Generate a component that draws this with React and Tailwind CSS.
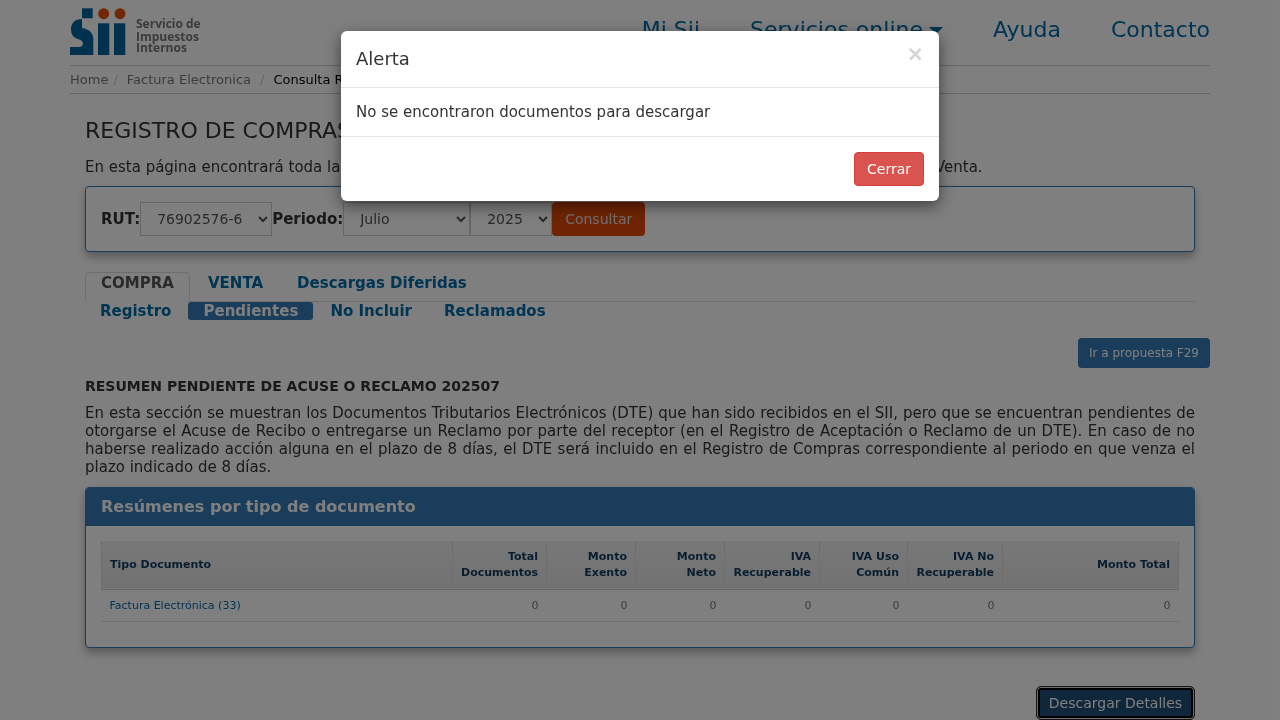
import React from "react";

function Logo() {
  return (
    <svg width="131" height="48" viewBox="0 0 131 48" className="block">
      <rect x="12" y="0.3" width="10.7" height="10" fill="#00649e" />
      <path d="M12 11 V20 C18 21 23.3 24 23.3 31 V47 H0 V39 H9 C12 39 13 37 13 35.5 C13 33 11 32 8 31 C4 30 1 27 1 21 C1 15 5 11 12 11 Z" fill="#00649e" />
      <circle cx="33.7" cy="5.7" r="5.5" fill="#e0500f" />
      <circle cx="50" cy="5.7" r="5.5" fill="#e0500f" />
      <rect x="28" y="15.3" width="11.3" height="31.7" fill="#00649e" />
      <rect x="44" y="15.3" width="11.3" height="31.7" fill="#00649e" />
      <g fill="#767676" fontFamily="'Open Sans', sans-serif" fontWeight="700" fontSize="12">
        <text x="66" y="20">Servicio de</text>
        <text x="66" y="32.5">Impuestos</text>
        <text x="66" y="43.5">Internos</text>
      </g>
    </svg>
  );
}

const cols = [
  { w: "w-[351px]", t: ["Tipo Documento"], left: true },
  { w: "w-[94px]", t: ["Total", "Documentos"] },
  { w: "w-[89px]", t: ["Monto", "Exento"] },
  { w: "w-[89px]", t: ["Monto", "Neto"] },
  { w: "w-[95px]", t: ["IVA", "Recuperable"] },
  { w: "w-[88px]", t: ["IVA Uso", "Común"] },
  { w: "w-[95px]", t: ["IVA No", "Recuperable"] },
  { w: "w-[176px]", t: ["Monto Total"] },
];

function Select({ className, children }) {
  return (
    <select className={`h-[34px] border border-[#cccccc] bg-white pl-[12px] pr-[4px] text-[14px] text-[#555555] ${className}`}>
      {children}
    </select>
  );
}

export default function App() {
  return (
    <div className="relative h-screen overflow-hidden bg-white text-[15px] leading-[18px] text-[#333333] font-['DejaVu_Sans',sans-serif] [will-change:transform]">
      <div className="mx-auto w-[1140px]">
        <header className="flex h-[66px] items-start justify-between border-b border-[#cccccc]">
          <div className="pt-[8px]">
            <Logo />
          </div>
          <nav className="flex items-center gap-[50px] pt-[15px] text-[22px] leading-[30px] text-[#006aa6]">
            <a>Mi Sii</a>
            <a className="flex items-center gap-[6px]">
              Servicios online
              <span className="mt-[1px] h-0 w-0 border-x-[7px] border-t-[7px] border-x-transparent border-t-[#006aa6]" />
            </a>
            <a>Ayuda</a>
            <a>Contacto</a>
          </nav>
        </header>

        <div className="flex h-[28px] items-center border-b border-[#cccccc] text-[13px] text-[#777777]">
          <span>Home</span>
          <span className="ml-[5px] text-[#cccccc]">/</span>
          <span className="ml-[9px]">Factura Electronica</span>
          <span className="ml-[9px] text-[#cccccc]">/</span>
          <span className="ml-[9px] text-black">Consulta Registro de Compras y Ventas</span>
        </div>

        <main className="px-[15px]">
          <h1 className="mt-[23px] text-[22px] leading-[28px] font-normal text-[#333333]">REGISTRO DE COMPRAS Y VENTAS</h1>
          <p className="mt-[12px] h-[20px] leading-[20px]">
            En esta página encontrará toda la información disponible que está relacionada con su Registro de Compras y de Venta.
          </p>

          <div className="mt-[9px] flex h-[66px] items-center rounded-[4px] border border-[#337ab7] bg-white px-[15px] shadow-[0_5px_10px_rgba(0,0,0,0.3)]">
            <label className="font-bold">RUT:</label>
            <Select className="w-[132px]"><option>76902576-6</option></Select>
            <label className="font-bold">Periodo:</label>
            <Select className="w-[127px]"><option>Julio</option></Select>
            <Select className="w-[82px]"><option>2025</option></Select>
            <button className="h-[34px] w-[93px] rounded-[4px] bg-[#e04808] text-[14px] text-[#e0e0e0]">Consultar</button>
          </div>

          <div className="mt-[20px] flex h-[30px] border-b border-[#dddddd] font-bold">
            <a className="h-[30px] w-[105px] rounded-t-[4px] border border-b-0 border-[#dddddd] bg-white pt-[1px] text-center text-[#555555]">COMPRA</a>
            <a className="ml-[18px] pt-[2px] text-[#006aa6]">VENTA</a>
            <a className="ml-[34px] pt-[2px] text-[#006aa6]">Descargas Diferidas</a>
          </div>
          <div className="flex h-[18px] font-bold text-[#006aa6]">
            <a className="ml-[15px]">Registro</a>
            <a className="ml-[17px] w-[125px] rounded-[3px] bg-[#337ab7] text-center text-white">Pendientes</a>
            <a className="ml-[17px]">No Incluir</a>
            <a className="ml-[32px]">Reclamados</a>
          </div>

          <div className="mt-[18px] -mr-[15px] flex justify-end">
            <button className="h-[30px] w-[132px] rounded-[4px] bg-[#337ab7] text-[12px] text-white">Ir a propuesta F29</button>
          </div>

          <h2 className="mt-[9px] text-[14px] leading-[18px] font-bold text-[#333333]">RESUMEN PENDIENTE DE ACUSE O RECLAMO 202507</h2>
          <p className="mt-[9px] text-justify">
            En esta sección se muestran los Documentos Tributarios Electrónicos (DTE) que han sido recibidos en el SII, pero que se encuentran pendientes de otorgarse el Acuse de Recibo o entregarse un Reclamo por parte del receptor (en el Registro de Aceptación o Reclamo de un DTE). En caso de no haberse realizado acción alguna en el plazo de 8 días, el DTE será incluido en el Registro de Compras correspondiente al periodo en que venza el plazo indicado de 8 días.
          </p>

          <section className="mt-[11px] h-[161px] rounded-[4px] border border-[#337ab7] bg-white shadow-[0_5px_10px_rgba(0,0,0,0.3)]">
            <div className="flex h-[38px] items-center rounded-t-[3px] bg-[#337ab7] px-[15px] text-[16px] font-bold text-white">
              Resúmenes por tipo de documento
            </div>
            <div className="px-[15px] pt-[15px]">
              <table className="w-[1077px] table-fixed border-collapse text-[11px] leading-[16px]">
                <thead>
                  <tr className="h-[48px] border-b border-[#cccccc] bg-gradient-to-b from-[#f0f0f0] to-[#e4e4e4]">
                    {cols.map((c, i) => (
                      <th key={i} className={`${c.w} border-x border-[#dddddd] px-[8px] font-bold text-[#103a5e] ${c.left ? "text-left" : "text-right"}`}>
                        {c.t.map((l) => <div key={l}>{l}</div>)}
                      </th>
                    ))}
                  </tr>
                </thead>
                <tbody>
                  <tr className="h-[32px] border-b border-[#dddddd] text-[#777777]">
                    <td className="px-[8px] pt-[1px] text-[#006aa6]">Factura Electrónica (33)</td>
                    {[0, 0, 0, 0, 0, 0, 0].map((v, i) => <td key={i} className="px-[8px] pt-[1px] text-right">{v}</td>)}
                  </tr>
                </tbody>
              </table>
            </div>
          </section>

          <div className="mt-[38px] flex justify-end">
            <button className="h-[34px] w-[159px] rounded-[5px] border border-[#222222] bg-[#204d74] text-[14px] text-white shadow-[inset_0_0_0_1px_#dddddd,inset_0_0_0_3px_#000000]">Descargar Detalles</button>
          </div>
        </main>
      </div>

      <div className="absolute inset-0 flex items-start justify-center bg-black/50 pt-[31px]">
        <div className="h-[170px] w-[598px] rounded-[6px] bg-white shadow-[0_5px_15px_rgba(0,0,0,0.5)]">
          <div className="flex h-[57px] items-start justify-between border-b border-[#e5e5e5] px-[15px]">
            <h4 className="pt-[18px] text-[18px] leading-[20px] font-normal text-[#333333]">Alerta</h4>
            <span className="pt-[11px] text-[21px] leading-[24px] font-bold text-[#d4d4d4]">×</span>
          </div>
          <div className="flex h-[49px] items-center border-b border-[#e5e5e5] px-[15px] text-[#333333]">
            No se encontraron documentos para descargar
          </div>
          <div className="flex justify-end px-[15px] pt-[15px]">
            <button className="h-[34px] w-[70px] rounded-[4px] border border-[#d43f3a] bg-[#d9534f] text-[14px] text-white">Cerrar</button>
          </div>
        </div>
      </div>
    </div>
  );
}
